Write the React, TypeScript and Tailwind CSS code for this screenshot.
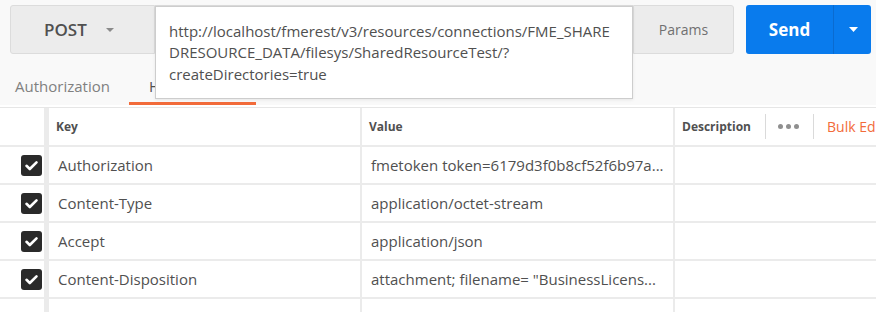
import React from "react";

const font = { fontFamily: '"Open Sans", "Noto Sans", sans-serif' };

function Caret({ color, w = 8, h = 4 }: { color: string; w?: number; h?: number }) {
  return (
    <svg width={w} height={h} viewBox={`0 0 ${w} ${h}`}>
      <polygon points={`0,0 ${w},0 ${w / 2},${h}`} fill={color} />
    </svg>
  );
}

function Check() {
  return (
    <div className="w-[21px] h-[21px] rounded-[3px] bg-[#2a2a2a] flex items-center justify-center">
      <svg width="21" height="21" viewBox="0 0 21 21">
        <path d="M5.5 10.8 L8.8 14 L15.5 7.3" stroke="#ffffff" strokeWidth="2.6" fill="none" strokeLinecap="round" strokeLinejoin="round" />
      </svg>
    </div>
  );
}

const rows = [
  { k: "Authorization", v: "fmetoken token=6179d3f0b8cf52f6b97a..." },
  { k: "Content-Type", v: "application/octet-stream" },
  { k: "Accept", v: "application/json" },
  { k: "Content-Disposition", v: 'attachment; filename= "BusinessLicens...' },
];

export default function App() {
  return (
    <div className="w-[876px] h-[312px] overflow-hidden bg-white relative" style={font}>
      <div className="bg-[#f9f9f9]">
        {/* top bar */}
        <div className="flex items-start pt-[5px] pl-[10px] pr-[5px] h-[54px]">
          <div className="w-[145px] h-[49px] rounded-l-[3px] bg-[#ececec] border border-[#dcdcdc] flex items-center pl-[33px]">
            <span className="text-[17px] font-semibold text-[#505050] leading-none">POST</span>
            <span className="ml-[19px] flex"><Caret color="#8a8a8a" /></span>
          </div>
          <div className="relative w-[478px] h-[49px] bg-white border-y border-[#dcdcdc]">
            <div className="absolute left-0 top-0 w-[478px] h-[93px] bg-white border border-[#cdcdcd] shadow-[0_1px_3px_rgba(0,0,0,0.08)] z-10 pl-[13px] pt-[14px] pr-[6px] text-[15px] leading-[21.3px] text-[#505050] whitespace-nowrap">
              <div>http://localhost/fmerest/v3/resources/connections/FME_SHARE</div>
              <div>DRESOURCE_DATA/filesys/SharedResourceTest/?</div>
              <div>createDirectories=true</div>
            </div>
          </div>
          <div className="flex-1 h-[49px] rounded-r-[3px] bg-[#ececec] border border-[#dcdcdc] flex items-center justify-center text-[14px] text-[#707070]">
            Params
          </div>
          <div className="ml-[12px] w-[125px] h-[49px] rounded-[3px] bg-[#097bed] flex">
            <div className="w-[87px] flex items-center justify-center text-[17px] font-bold text-white">Send</div>
            <div className="w-px bg-[#0a6bd0]" />
            <div className="flex-1 flex items-center justify-center pl-[1px]"><Caret color="#ffffff" w={9} h={5} /></div>
          </div>
        </div>
        {/* tabs */}
        <div className="flex h-[51px] pl-[15px] mb-[2px] text-[15px] text-[#808080]">
          <div className="flex items-end pb-[9px] leading-[20px]">Authorization</div>
          <div className="ml-[19px] w-[127px] flex items-end pb-[6px] pl-[20px] leading-[20px] border-b-[3px] border-[#f26b3a] text-[#505050] whitespace-nowrap overflow-hidden">
            Headers (4)
          </div>
        </div>
      </div>
      {/* table */}
      <div className="border-t border-[#e6e6e6] text-[#505050]">
        <div className="flex h-[39px] border-b-2 border-[#ebebeb] text-[12px] font-bold">
          <div className="w-[49px] border-r-[5px] border-[#ebebeb]" />
          <div className="w-[313px] border-r-2 border-[#ebebeb] flex items-center pl-[7px]">Key</div>
          <div className="w-[313px] border-r-2 border-[#ebebeb] flex items-center pl-[7px]">Value</div>
          <div className="flex-1 flex items-center pl-[7px] whitespace-nowrap overflow-hidden">
            <span>Description</span>
            <div className="ml-[14px] w-px h-[25px] bg-[#dadada] shrink-0" />
            <div className="ml-[12px] flex gap-[3px] shrink-0">
              <span className="w-[5px] h-[5px] rounded-full bg-[#8f8f8f]" />
              <span className="w-[5px] h-[5px] rounded-full bg-[#8f8f8f]" />
              <span className="w-[5px] h-[5px] rounded-full bg-[#8f8f8f]" />
            </div>
            <div className="ml-[14px] w-px h-[25px] bg-[#dadada] shrink-0" />
            <span className="ml-[13px] text-[14px] font-normal text-[#f26b3a]">Bulk Edit</span>
          </div>
        </div>
        {rows.map((r) => (
          <div key={r.k} className="flex h-[38px] border-b-2 border-[#ebebeb] text-[15px]">
            <div className="w-[49px] border-r-[5px] border-[#ebebeb] flex items-center justify-end pr-[2px] pt-[1px]">
              <Check />
            </div>
            <div className="w-[313px] border-r-2 border-[#ebebeb] flex items-center pl-[9px] whitespace-nowrap overflow-hidden">{r.k}</div>
            <div className="w-[313px] border-r-2 border-[#ebebeb] flex items-center pl-[9px] whitespace-nowrap overflow-hidden">{r.v}</div>
            <div className="flex-1" />
          </div>
        ))}
        <div className="flex h-[36px] text-[15px] text-[#c4c4c4]">
          <div className="w-[49px] border-r-[5px] border-[#ebebeb]" />
          <div className="w-[313px] border-r-2 border-[#ebebeb] flex items-center pl-[9px]">Key</div>
          <div className="w-[313px] border-r-2 border-[#ebebeb] flex items-center pl-[9px]">Value</div>
          <div className="flex-1 flex items-center pl-[7px]">Description</div>
        </div>
      </div>
    </div>
  );
}
